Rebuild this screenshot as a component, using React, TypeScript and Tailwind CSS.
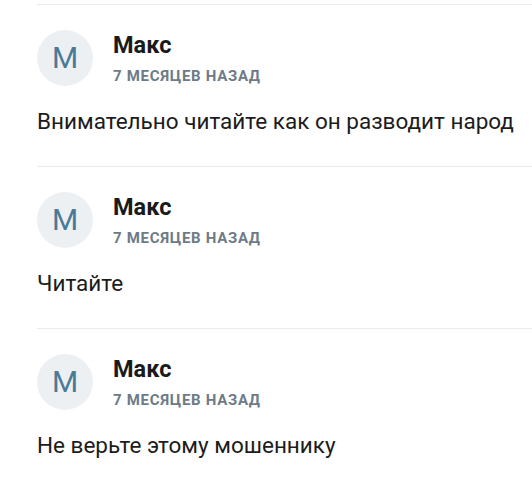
const comments = [
  { name: 'Макс', date: '7 месяцев назад', text: 'Внимательно читайте как он разводит народ' },
  { name: 'Макс', date: '7 месяцев назад', text: 'Читайте' },
  { name: 'Макс', date: '7 месяцев назад', text: 'Не верьте этому мошеннику' },
];

function Comment({ name, date, text }: { name: string; date: string; text: string }) {
  return (
    <div className="border-t border-[#ebebeb] pt-[25px] pb-[30px]">
      <div className="flex items-start gap-5 h-14">
        <div className="w-14 h-14 rounded-full bg-[#edf0f3] flex items-center justify-center shrink-0">
          <span className="text-[30px] leading-none text-[#497b97]">M</span>
        </div>
        <div className="flex flex-col pt-[1px]">
          <span className="text-[23.5px] leading-7 font-bold text-[#1a1a1a]">{name}</span>
          <span className="mt-[7px] text-[15px] leading-5 font-bold uppercase tracking-[0.7px] text-[#6d7b87]">
            {date}
          </span>
        </div>
      </div>
      <p className="mt-5 text-[22.5px] leading-[30px] text-[#1c1c1c] whitespace-nowrap">{text}</p>
    </div>
  );
}

export default function App() {
  return (
    <div
      className="w-[532px] h-[479px] overflow-hidden bg-white pt-1 pl-[37px]"
      style={{ fontFamily: 'Roboto, "Noto Sans", sans-serif' }}
    >
      {comments.map((c, i) => (
        <Comment key={i} {...c} />
      ))}
    </div>
  );
}
